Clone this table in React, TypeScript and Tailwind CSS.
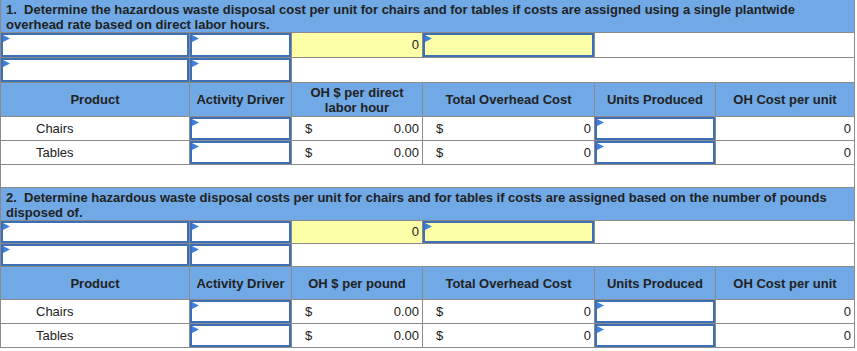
import React from "react";

const font = { fontFamily: '"Liberation Sans", Arial, sans-serif' };

function Tri() {
  return (
    <svg width="7" height="8" viewBox="0 0 7 8" className="absolute left-0 top-0">
      <polygon points="0,0 7,3.5 0,7" fill="#3f7fdc" />
    </svg>
  );
}

function Input({ yellow = false }: { yellow?: boolean }) {
  return (
    <div
      className={`relative h-full border-2 border-[#3d6fb6] ${yellow ? "bg-[#fdffa8]" : "bg-white"}`}
    >
      <Tri />
    </div>
  );
}

function Title({ children }: { children: React.ReactNode }) {
  return (
    <div className="col-span-6 h-[32px] bg-[#70a9e6] px-[5px] pt-[2px] text-[13px] font-bold leading-[15px] text-[#222]">
      {children}
    </div>
  );
}

function Head({ children, h = "" }: { children: React.ReactNode; h?: string }) {
  return (
    <div className={`${h} flex items-center justify-center bg-[#70a9e6] text-center text-[13px] font-bold leading-[15px] text-[#222]`}>
      {children}
    </div>
  );
}

function Money({ value }: { value: string }) {
  return (
    <div className="flex items-center justify-between bg-white pl-[13px] pr-[3px] text-[13px] text-[#222]">
      <span>$</span>
      <span>{value}</span>
    </div>
  );
}

function Section({ n }: { n: 1 | 2 }) {
  const inH = n === 1 ? "h-[24px]" : "h-[22px]";
  const hdH = n === 1 ? "h-[33px]" : "h-[32px]";
  return (
    <>
      <div className={inH}>
        <Input />
      </div>
      <div className={inH}>
        <Input />
      </div>
      <div className={`${inH} flex items-center justify-end bg-[#fdffa8] pr-[3px] text-[13px] text-[#222]`}>0</div>
      <div className={inH}>
        <Input yellow />
      </div>
      <div className={`${inH} col-span-2 bg-white`} />

      <div className={inH}>
        <Input />
      </div>
      <div className={inH}>
        <Input />
      </div>
      <div className={`${inH} col-span-4 bg-white`} />

      <Head h={hdH}>Product</Head>
      <Head>Activity Driver</Head>
      <Head>
        {n === 1 ? (
          <>
            OH $ per direct
            <br />
            labor hour
          </>
        ) : (
          "OH $ per pound"
        )}
      </Head>
      <Head>Total Overhead Cost</Head>
      <Head>Units Produced</Head>
      <Head>OH Cost per unit</Head>

      {["Chairs", "Tables"].map((p) => (
        <React.Fragment key={p}>
          <div className="flex h-[23px] items-center bg-white pl-[35px] text-[13px] text-[#222]">{p}</div>
          <div className="h-[23px]">
            <Input />
          </div>
          <Money value="0.00" />
          <Money value="0" />
          <div className="h-[23px]">
            <Input />
          </div>
          <div className="flex items-center justify-end bg-white pr-[3px] text-[13px] text-[#222]">0</div>
        </React.Fragment>
      ))}
    </>
  );
}

export default function App() {
  return (
    <div className="h-[351px] w-[857px] bg-white" style={font}>
      <div className="grid w-[855px] grid-cols-[188px_101px_130px_171px_120px_138px] gap-px border-x border-b border-[#8a8a8a] bg-[#8a8a8a]">
        <Title>
          1.&nbsp; Determine the hazardous waste disposal cost per unit for chairs and for tables if costs are assigned using a single plantwide
          <br />
          overhead rate based on direct labor hours.
        </Title>
        <Section n={1} />
        <div className="col-span-6 h-[22px] bg-white" />
        <Title>
          2.&nbsp; Determine hazardous waste disposal costs per unit for chairs and for tables if costs are assigned based on the number of pounds
          <br />
          disposed of.
        </Title>
        <Section n={2} />
      </div>
    </div>
  );
}
